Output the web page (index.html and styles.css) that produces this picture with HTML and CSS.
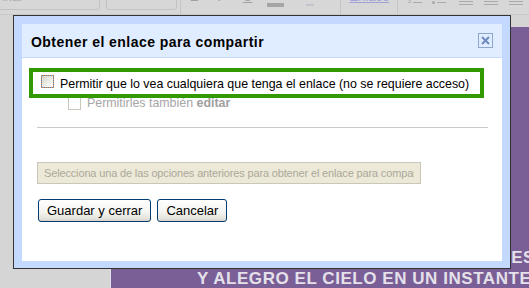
FILE: index.html
```html
<!DOCTYPE html>
<html lang="es">
<head>
    <meta charset="UTF-8">
    <meta name="viewport" content="width=device-width, initial-scale=1.0">
    <title>Obtener el enlace para compartir</title>
    <link rel="stylesheet" href="styles.css">
</head>
<body>
    <div class="page">
        <!-- toolbar of the editor behind the dialog, mostly cut off -->
        <div class="toolbar">
            <div class="tb-select tb-font"><span class="tb-value">Arial</span><span class="tb-arrow">&#9662;</span></div>
            <div class="tb-select tb-size"><span class="tb-arrow">&#9662;</span></div>
            <span class="tb-sep tb-sep1"></span>
            <span class="tb-glyph tb-bold">B</span>
            <span class="tb-glyph tb-italic">I</span>
            <span class="tb-glyph tb-under">U</span>
            <span class="tb-color"><span class="tb-color-bar"></span></span>
            <span class="tb-hilite"><span class="tb-hilite-bar"></span></span>
            <span class="tb-sep tb-sep2"></span>
            <span class="tb-link">Enlace</span>
            <span class="tb-sep tb-sep3"></span>
            <span class="tb-list tb-num"><span class="tb-dig">3</span><span class="tb-dash"></span></span>
            <span class="tb-list tb-bul"><span class="tb-dot"></span><span class="tb-dash"></span></span>
            <span class="tb-lines tb-ind1"></span>
            <span class="tb-lines tb-ind2"></span>
            <span class="tb-lines tb-align"></span>
        </div>

        <div class="editor">
            <div class="doc">
                <div class="doc-line doc-line1">COLORES</div>
                <div class="doc-line doc-line2">Y ALEGRO EL CIELO EN UN INSTANTE</div>
            </div>
        </div>

        <div class="dialog">
            <div class="dialog-inner">
                <div class="dialog-title">
                    <span class="dialog-heading">Obtener el enlace para compartir</span>
                    <span class="dialog-close">
                        <svg width="13" height="13" viewBox="0 0 13 13">
                            <path d="M3 3 L10 10 M10 3 L3 10" stroke="#6f8cbf" stroke-width="2" fill="none"/>
                        </svg>
                    </span>
                </div>
                <div class="dialog-body">
                    <div class="option option-main">
                        <span class="check check-focus"></span>
                        <span class="option-label">Permitir que lo vea cualquiera que tenga el enlace (no se requiere acceso)</span>
                    </div>
                    <div class="option option-sub">
                        <span class="check check-disabled"></span>
                        <span class="option-label option-disabled">Permitirles también <b>editar</b></span>
                    </div>
                    <div class="divider"></div>
                    <input class="link-field" type="text" disabled value="Selecciona una de las opciones anteriores para obtener el enlace para compartir">
                    <div class="button-group">
                        <button class="btn">Guardar y cerrar</button>
                        <button class="btn">Cancelar</button>
                    </div>
                </div>
                <div class="highlight"></div>
            </div>
        </div>
    </div>
</body>
</html>
```

FILE: styles.css
```css
body {
    margin: 0;
    padding: 0;
    background-color: #d5d5d5;
    font-family: "Liberation Sans", Arial, sans-serif;
    overflow: hidden;
}
.page {
    position: relative;
    width: 529px;
    height: 288px;
    overflow: hidden;
}

/* editor toolbar */
.toolbar {
    height: 14px;
    background-color: #d7d7d7;
    border-bottom: 1px solid #c8c8c8;
    display: flex;
    align-items: flex-end;
    overflow: hidden;
    color: #a3a3a3;
}
.tb-select {
    height: 28px;
    margin-bottom: 4px;
    border: 1px solid #c2c2c2;
    border-radius: 3px;
    display: flex;
    align-items: center;
    justify-content: space-between;
    box-sizing: border-box;
    font-size: 13px;
    color: #acacac;
    padding: 0 3px;
}
.tb-font {
    width: 108px;
    margin-left: -8px;
}
.tb-size {
    width: 71px;
    margin-left: 6px;
    justify-content: flex-end;
}
.tb-arrow {
    font-size: 9px;
    color: #a8a8a8;
}
.tb-sep {
    width: 1px;
    height: 14px;
    background-color: #c5c5c5;
}
.tb-sep1 { margin-left: 3px; }
.tb-glyph {
    font-size: 13px;
    line-height: 12px;
    margin-bottom: 11px;
    color: #a0a0a0;
}
.tb-bold { font-weight: bold; margin-left: 9px; }
.tb-italic { margin-left: 18px; }
.tb-under { margin-left: 22px; text-decoration: underline; }
.tb-color {
    width: 17px;
    height: 12px;
    margin-left: 15px;
    margin-bottom: 7px;
    display: flex;
    align-items: flex-end;
}
.tb-color-bar {
    width: 17px;
    height: 4px;
    background-color: #a5a5a5;
}
.tb-hilite {
    width: 8px;
    height: 12px;
    margin-left: 22px;
    margin-bottom: 8px;
    display: flex;
    align-items: flex-end;
}
.tb-hilite-bar {
    width: 8px;
    height: 2px;
    background-color: #c4c4ce;
}
.tb-sep2 { margin-left: 26px; }
.tb-link {
    margin-left: 8px;
    font-size: 13px;
    line-height: 12px;
    margin-bottom: 11px;
    color: #9fa3d8;
    text-decoration: underline;
}
.tb-sep3 { margin-left: 8px; }
.tb-list {
    display: flex;
    align-items: flex-end;
    margin-bottom: 10px;
}
.tb-num { margin-left: 9px; }
.tb-bul { margin-left: 10px; }
.tb-dig {
    font-size: 7px;
    line-height: 6px;
    color: #a8a8a8;
}
.tb-dot {
    width: 3px;
    height: 3px;
    border-radius: 2px;
    background-color: #a8a8a8;
}
.tb-dash {
    width: 9px;
    height: 1px;
    margin-left: 2px;
    margin-bottom: 1px;
    background-color: #aaaaaa;
}
.tb-lines {
    width: 14px;
    height: 4px;
    margin-bottom: 9px;
    border-bottom: 1px solid #aaaaaa;
    background: linear-gradient(#d7d7d7 1px, #aaaaaa 1px, #aaaaaa 2px, #d7d7d7 2px);
}
.tb-ind1 { margin-left: 13px; }
.tb-ind2 { margin-left: 11px; }
.tb-align { margin-left: 11px; }

/* document behind */
.editor {
    padding-top: 12px;
    padding-left: 111px;
}
.doc {
    height: 261px;
    background-color: #7a5e96;
    border-left: 1px solid #e2e2e2;
    margin-left: -1px;
    padding-top: 220px;
    box-sizing: border-box;
    font-size: 17px;
    font-weight: bold;
    line-height: 21px;
    letter-spacing: 0.55px;
    color: #e5e1ea;
    white-space: nowrap;
}
.doc-line1 { padding-left: 336px; }
.doc-line2 { padding-left: 86px; }

/* sharing dialog */
.dialog {
    position: absolute;
    left: 13px;
    top: 15px;
    width: 480px;
    padding: 8px 8px 7px;
    background-color: #c3d9ff;
    border: 1px solid #333333;
}
.dialog-inner {
    position: relative;
    height: 237px;
    background-color: #ffffff;
}
.dialog-title {
    height: 33px;
    background-color: #e0ecff;
    border-bottom: 1px solid #c3d9ff;
    display: flex;
    align-items: center;
    justify-content: space-between;
    padding: 0 9px 0 9px;
}
.dialog-heading {
    font-size: 14px;
    font-weight: bold;
    letter-spacing: 0.45px;
    color: #000000;
    padding-top: 3px;
}
.dialog-close {
    width: 13px;
    height: 13px;
    border: 1px solid #8ea6c9;
    display: flex;
}
.dialog-body {
    padding: 12px 14px 0 15px;
}
.option {
    display: flex;
    align-items: center;
    height: 22px;
}
.option-main { padding-left: 4px; }
.option-sub { padding-left: 31px; }
.check {
    width: 13px;
    height: 13px;
    box-sizing: border-box;
    margin-right: 6px;
    flex-shrink: 0;
}
.check-focus {
    border: 1px dotted #e0954a;
    background: linear-gradient(135deg, #d4d4cc, #f4f4f0 70%, #ffffff) padding-box, #5a7db3 border-box;
}
.check-disabled {
    border: 1px solid #cac8bb;
    background-color: #ffffff;
}
.option-label {
    font-size: 12.4px;
    color: #000000;
}
.option-main .option-label {
    padding-top: 5px;
}
.option-disabled {
    color: #a6a6a6;
}
.option-disabled b {
    color: #a0a0a0;
}
.divider {
    margin-top: 13px;
    border-top: 1px solid #c9c9c9;
}
.link-field {
    display: block;
    margin: 34px 0 0 0;
    width: 384px;
    height: 22px;
    box-sizing: border-box;
    padding: 0 6px;
    border: 1px solid #c9c7ba;
    background-color: #ece9d8;
    font-family: "Liberation Sans", Arial, sans-serif;
    font-size: 11px;
    letter-spacing: -0.15px;
    color: #aca899;
}
.button-group {
    display: flex;
    gap: 6px;
    margin-top: 15px;
    padding-left: 1px;
}
.btn {
    height: 23px;
    padding: 0 8px;
    border: 1px solid #003c74;
    border-radius: 3px;
    background: linear-gradient(#ffffff, #f3f3ef 60%, #e3e2da 90%, #d6d0c5);
    font-family: "Liberation Sans", Arial, sans-serif;
    font-size: 13px;
    color: #000000;
}

/* green annotation box drawn over the first option */
.highlight {
    position: absolute;
    left: 7px;
    top: 44px;
    width: 447px;
    height: 22px;
    border: 4px solid #339900;
}
```
